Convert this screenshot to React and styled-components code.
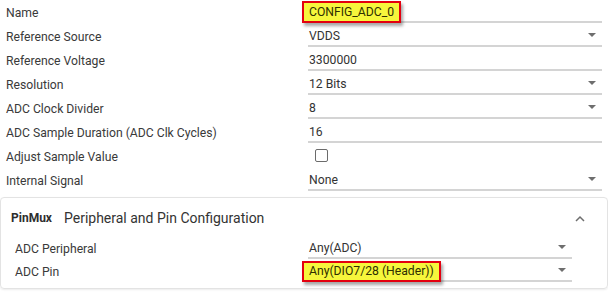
import React from "react";
import styled, { createGlobalStyle } from "styled-components";

const GlobalStyle = createGlobalStyle`
  body {
    margin: 0;
    background: #ffffff;
    font-family: Roboto, "Liberation Sans", sans-serif;
    color: #333333;
  }
`;

const Page = styled.div`
  width: 608px;
  height: 294px;
  overflow: hidden;
  padding-top: 2px;
  box-sizing: border-box;
`;

const Section = styled.div`
  padding-left: 6px;
`;

const Row = styled.div`
  display: grid;
  grid-template-columns: ${(p) => p.$labelWidth}px ${(p) => p.$fieldWidth}px;
  align-items: start;
  height: ${(p) => p.$height}px;
`;

const Label = styled.div`
  font-size: 12.2px;
  line-height: 23px;
  color: #3a3a3a;
  white-space: nowrap;
`;

const Field = styled.div`
  height: 21px;
  box-sizing: border-box;
  display: flex;
  align-items: center;
  justify-content: space-between;
  padding: 1px 6px 0 1px;
  font-size: 12.2px;
  color: #333333;
  border-bottom: ${(p) => (p.$plain ? "none" : "2px solid #d4d4d4")};
  white-space: nowrap;
`;

const Arrow = styled.span`
  width: 0;
  height: 0;
  border-left: 4px solid transparent;
  border-right: 4px solid transparent;
  border-top: 4px solid #6e6e6e;
  margin-top: -3px;
`;

const Highlight = styled.span`
  display: inline-block;
  background: #f6f63c;
  border: 2px solid #e3000f;
  padding: 0 5px;
  margin-left: -7px;
  line-height: ${(p) => p.$height}px;
  box-shadow: 2px 3px 3px rgba(0, 0, 0, 0.35);
  color: #2f2f00;
`;

const Checkbox = styled.span`
  width: 13px;
  height: 13px;
  box-sizing: border-box;
  border: 1.5px solid #6b6b6b;
  border-radius: 2px;
  margin-left: 6px;
  margin-top: -3px;
`;

const Card = styled.div`
  margin-top: 3px;
  border: 1px solid #e3e3e3;
  border-radius: 4px;
  box-shadow: 0 1px 2px rgba(0, 0, 0, 0.08);
  height: 92px;
  box-sizing: border-box;
`;

const CardHeader = styled.div`
  display: flex;
  align-items: center;
  height: 40px;
  padding: 0 22px 0 10px;
`;

const Tag = styled.span`
  font-size: 12px;
  font-weight: 700;
  color: #2e2e2e;
  margin-right: 12px;
`;

const Title = styled.span`
  font-size: 14px;
  color: #333333;
  flex: 1;
`;

const CardBody = styled.div`
  padding-left: 14px;
`;

const Chevron = () => (
  <svg width="10" height="7" viewBox="0 0 10 7">
    <path d="M1 6 L5 2 L9 6" fill="none" stroke="#6e6e6e" strokeWidth="1.5" />
  </svg>
);

const mainRows = [
  { label: "Name", value: "CONFIG_ADC_0", highlight: true },
  { label: "Reference Source", value: "VDDS", select: true },
  { label: "Reference Voltage", value: "3300000" },
  { label: "Resolution", value: "12 Bits", select: true },
  { label: "ADC Clock Divider", value: "8", select: true },
  { label: "ADC Sample Duration (ADC Clk Cycles)", value: "16" },
  { label: "Adjust Sample Value", checkbox: true },
  { label: "Internal Signal", value: "None", select: true },
];

const pinRows = [
  { label: "ADC Peripheral", value: "Any(ADC)", select: true },
  { label: "ADC Pin", value: "Any(DIO7/28 (Header))", select: true, highlight: true },
];

const renderRow = (row, labelWidth, fieldWidth, rowHeight, hlHeight) => (
  <Row key={row.label} $labelWidth={labelWidth} $fieldWidth={fieldWidth} $height={rowHeight}>
    <Label>{row.label}</Label>
    {row.checkbox ? (
      <Field $plain>
        <Checkbox />
      </Field>
    ) : (
      <Field>
        {row.highlight ? <Highlight $height={hlHeight}>{row.value}</Highlight> : <span>{row.value}</span>}
        {row.select && <Arrow />}
      </Field>
    )}
  </Row>
);

const App = () => (
  <Page>
    <GlobalStyle />
    <Section>{mainRows.map((r) => renderRow(r, 302, 294, 24, 18))}</Section>
    <Card>
      <CardHeader>
        <Tag>PinMux</Tag>
        <Title>Peripheral and Pin Configuration</Title>
        <Chevron />
      </CardHeader>
      <CardBody>{pinRows.map((r) => renderRow(r, 293, 264, 23, 17))}</CardBody>
    </Card>
  </Page>
);

export default App;
